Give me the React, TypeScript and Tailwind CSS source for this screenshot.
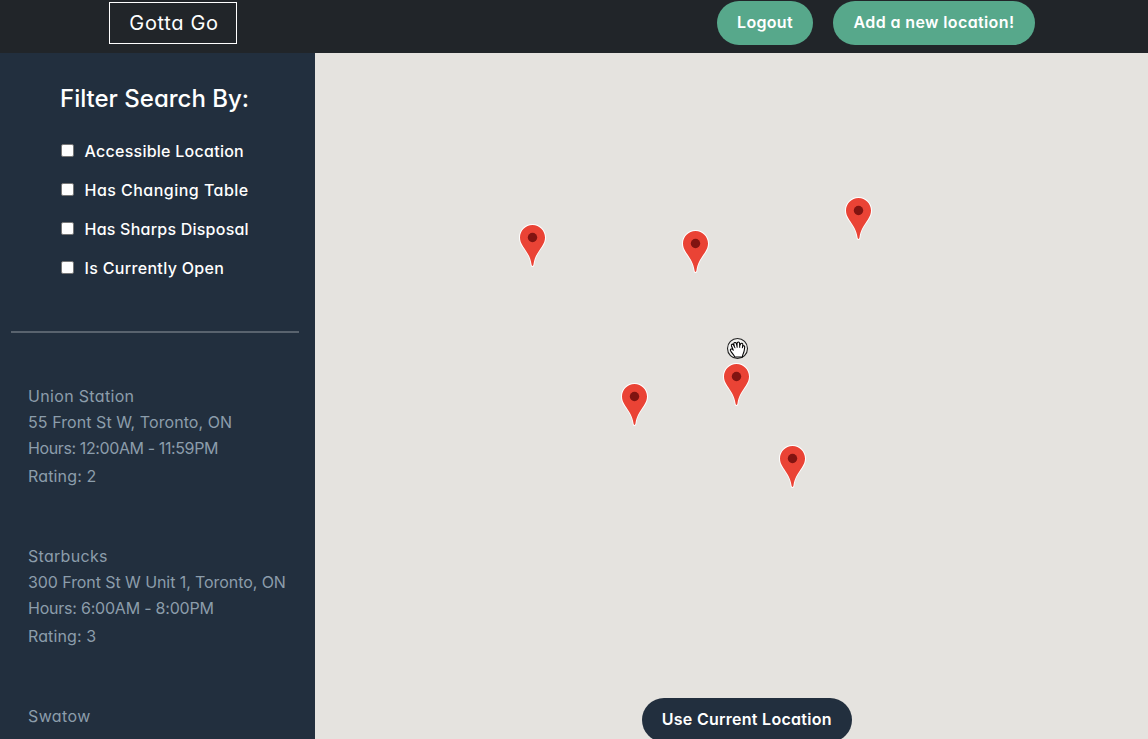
const PINS = [
  { id: "spadina", at: "left-[204px] top-[171px]" },
  { id: "queen", at: "left-[367px] top-[177px]" },
  { id: "jarvis", at: "left-[530px] top-[144px]" },
  { id: "front", at: "left-[306px] top-[330px]" },
  { id: "union", at: "left-[408px] top-[310px]" },
  { id: "harbour", at: "left-[464px] top-[392px]" },
];

const FILTERS = [
  { label: "Accessible Location", tracking: "tracking-[0.26px]" },
  { label: "Has Changing Table", tracking: "tracking-[0.47px]" },
  { label: "Has Sharps Disposal", tracking: "tracking-[0.23px]" },
  { label: "Is Currently Open", tracking: "tracking-[0.33px]" },
];

const PLACES = [
  {
    name: ["Union Station", "tracking-[0.33px]"],
    address: ["55 Front St W, Toronto, ON", "tracking-[0.07px]"],
    hours: ["Hours: 12:00AM - 11:59PM", "tracking-[-0.39px]"],
    rating: ["Rating: 2", "tracking-[0.15px]"],
  },
  {
    name: ["Starbucks", "tracking-[0.3px]"],
    address: ["300 Front St W Unit 1, Toronto, ON", "tracking-[-0.08px]"],
    hours: ["Hours: 6:00AM - 8:00PM", "tracking-[-0.22px]"],
    rating: ["Rating: 3", "tracking-[0.12px]"],
  },
  { name: ["Swatow", "tracking-[0.4px]"] },
];

function Pin({ at }: { at: string }) {
  return (
    <svg className={`absolute h-[43px] w-[27px] ${at}`} viewBox="0 0 27 43">
      <path
        d="M13.500 0C6 0 0 6 0 13.500c0 3.300 1.100 6.300 3.300 9.500 4.200 6 7.500 10.300 8.300 17.300.15 1.700.7 2.700 1.900 2.700s1.750-1 1.900-2.700c.8-7 4.100-11.300 8.300-17.300 2.200-3.200 3.300-6.200 3.300-9.500C27 6 21 0 13.500 0z"
        fill="#fff"
      />
      <path
        d="M13.500 1C6.600 1 1 6.600 1 13.500c0 3 1 5.800 3.100 8.900 4.200 6.200 7.500 10.600 8.400 17.900.15 1.200.45 1.700 1 1.700s.85-.5 1-1.700c.9-7.300 4.200-11.700 8.400-17.900 2.100-3.100 3.100-5.900 3.100-8.900C26 6.600 20.400 1 13.500 1z"
        fill="#ea4335"
      />
      <circle cx="13.500" cy="13.500" r="4.700" fill="#811411" />
    </svg>
  );
}

function HandCursor() {
  return (
    <svg className="absolute left-[411px] top-[284px] h-[23px] w-[23px]" viewBox="0 0 23 23">
      <circle cx="11.500" cy="11.500" r="10" fill="#f3f3f1" stroke="#222" strokeWidth="1.100" />
      <path
        d="M8.600 20c-.4-1.800-1.700-2.800-2.800-4.300-.9-1.300-1.900-2.400-1.400-3.300.6-.9 1.900-.3 2.900.8L5.500 9c-.6-1.700 1.200-2.500 2-1l.9 1.600-.6-2.600c-.3-1.700 1.900-2.100 2.500-.6l.7 2.400.1-2.700c.2-1.500 2.300-1.500 2.500.1l.1 2.700.8-1.900c.7-1.300 2.500-.8 2.300.6l-.2 1.900c.7-1.200 2.300-.8 2.100.6-.3 2.200-.3 3.500-1 5.400-.6 1.600-1.300 2.400-1.200 4.400z"
        fill="#fff"
        stroke="#000"
        strokeWidth="1.100"
        strokeLinejoin="round"
      />
      <path d="m8.400 9.500.7 1.700M11 8.800l.2 1.900M13.700 9.100v1.700M16.600 9.500l-.3 1.700" stroke="#000" strokeWidth="1" fill="none" />
    </svg>
  );
}

export default function App() {
  return (
    <div className="flex h-[739px] w-full flex-col overflow-hidden font-['Inter','Liberation_Sans',sans-serif] [font-feature-settings:'cv11','calt'_0]">
      <header className="flex h-[53px] shrink-0 items-start bg-[#212529] pl-[109px] text-white">
        <a className="mt-[2px] flex h-[42px] w-[128px] items-center justify-center border border-white pl-[2px] text-[20px] whitespace-nowrap">
          <span className="tracking-[0.65px]">Gotta Go</span>
        </a>
        <nav className="mt-px ml-[480px] flex gap-5 text-[16px] font-semibold whitespace-nowrap">
          <button className="flex h-11 w-24 items-center justify-center rounded-full bg-[#57a88b] pb-[2px]">
            <span className="tracking-[0.3px]">Logout</span>
          </button>
          <button className="flex h-11 w-[202px] items-center justify-center rounded-full bg-[#57a88b] pb-[2px]">
            <span className="tracking-[0.38px]">Add a new location!</span>
          </button>
        </nav>
      </header>

      <div className="flex min-h-0 flex-1">
        <aside className="w-[315px] shrink-0 overflow-hidden bg-[#222f3e] whitespace-nowrap">
          <section className="pt-[28px] pl-[61px] text-white">
            <h2 className="text-[24px] leading-9 font-medium">
              <span className="-ml-px">Filter Search By:</span>
            </h2>
            <div className="mt-[22px] flex flex-col gap-[15px] text-[16px] leading-6 font-medium">
              {FILTERS.map((f) => (
                <label key={f.label} className="flex">
                  <input
                    type="checkbox"
                    className="mt-[5px] mr-[10.5px] h-[13px] w-[13px] appearance-none rounded-[2px] border border-[#767676] bg-white"
                  />
                  <span className={f.tracking}>{f.label}</span>
                </label>
              ))}
            </div>
          </section>

          <hr className="mt-[51px] ml-[11px] h-[2px] w-[288px] border-0 bg-[#59636e]" />

          <section className="mt-[50px] flex flex-col gap-[54px] pl-7 text-[16px] leading-[26px] text-[#8c9dab]">
            {PLACES.map((p) => (
              <article key={p.name[0]}>
                <h3><span className={p.name[1]}>{p.name[0]}</span></h3>
                {p.address && <p><span className={p.address[1]}>{p.address[0]}</span></p>}
                {p.hours && <p><span className={p.hours[1]}>{p.hours[0]}</span></p>}
                {p.rating && <p className="mt-[2px]"><span className={p.rating[1]}>{p.rating[0]}</span></p>}
              </article>
            ))}
          </section>
        </aside>

        <main className="relative flex min-w-0 flex-1 bg-[#e5e3df]">
          {PINS.map((p) => (
            <Pin key={p.id} at={p.at} />
          ))}
          <HandCursor />
          <button className="absolute top-[645px] left-[327px] flex h-11 w-[209.500px] items-center justify-center rounded-full bg-[#222f3e] pb-[2px] text-[16px] font-semibold whitespace-nowrap text-white">
            <span className="tracking-[0.27px]">Use Current Location</span>
          </button>
        </main>
      </div>
    </div>
  );
}
